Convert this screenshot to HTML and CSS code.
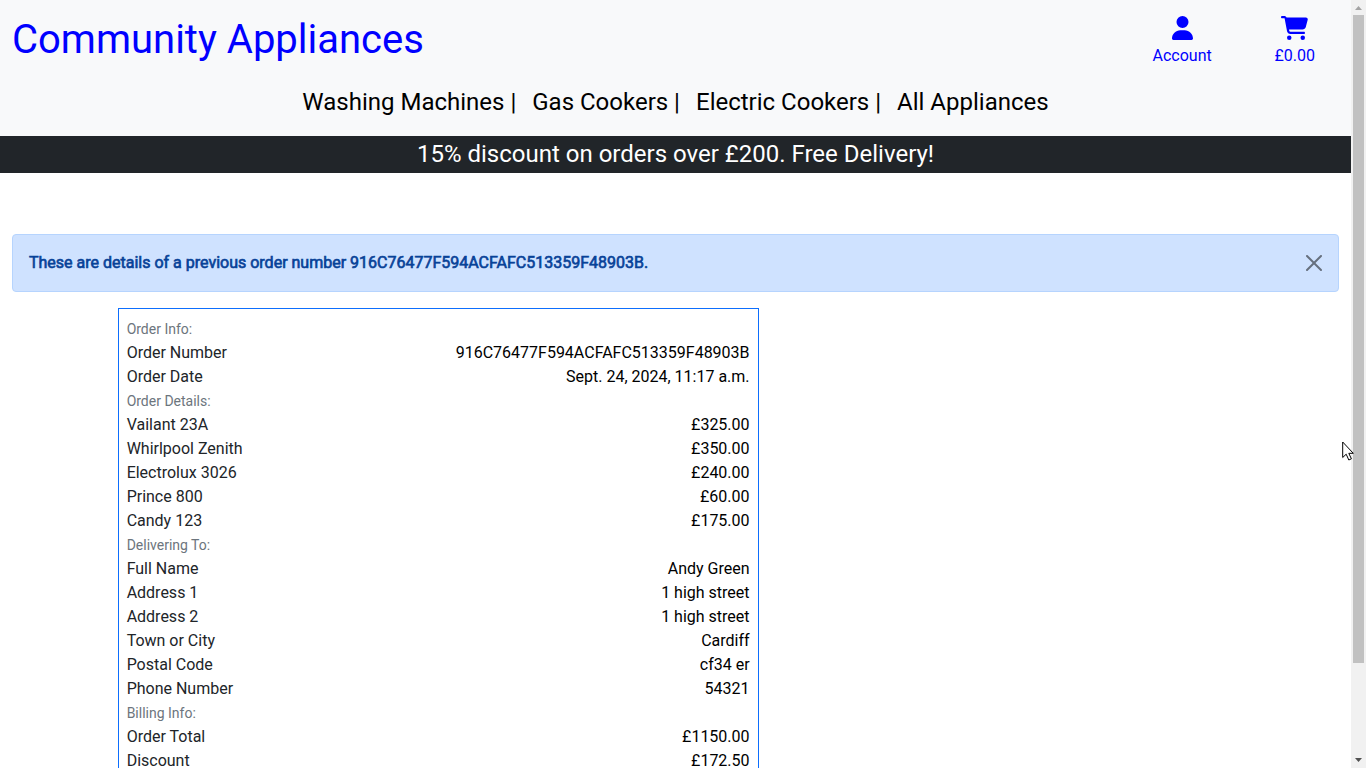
FILE: index.html
```html
<!DOCTYPE html>
<html lang="en">
<head>
<meta charset="utf-8">
<meta name="viewport" content="width=device-width, initial-scale=1">
<title>Community Appliances</title>
<link rel="stylesheet" href="styles.css">
</head>
<body>
<div class="page">
  <header class="site-header">
    <div class="top-row">
      <h1 class="brand"><a href="#">Community Appliances</a></h1>
      <a class="tool" href="#">
        <svg class="tool-icon" viewBox="0 0 448 512" aria-hidden="true"><path d="M224 256A128 128 0 1 0 224 0a128 128 0 1 0 0 256zm-45.700 48C79.800 304 0 383.800 0 482.300C0 498.700 13.300 512 29.700 512H418.300c16.400 0 29.700-13.300 29.700-29.700C448 383.800 368.200 304 269.700 304H178.300z"/></svg>
        <span>Account</span>
      </a>
      <a class="tool" href="#">
        <svg class="tool-icon" viewBox="0 0 576 512" aria-hidden="true"><path d="M0 24C0 10.700 10.700 0 24 0H69.500c22 0 41.500 12.800 50.600 32h411c26.300 0 45.500 25 38.600 50.400l-41 152.300c-8.500 31.400-37 53.300-69.500 53.300H170.700l5.400 28.500c2.200 11.300 12.100 19.500 23.600 19.500H488c13.300 0 24 10.700 24 24s-10.700 24-24 24H199.700c-34.600 0-64.300-24.600-70.700-58.500L77.400 54.500c-.7-3.800-4-6.500-7.900-6.500H24C10.700 48 0 37.300 0 24zM128 464a48 48 0 1 1 96 0 48 48 0 1 1 -96 0zm336-48a48 48 0 1 1 0 96 48 48 0 1 1 0-96z"/></svg>
        <span>£0.00</span>
      </a>
    </div>
    <nav>
      <ul class="nav-list">
        <li><a href="#">Washing Machines |</a></li>
        <li><a href="#">Gas Cookers |</a></li>
        <li><a href="#">Electric Cookers |</a></li>
        <li><a href="#">All Appliances</a></li>
      </ul>
    </nav>
  </header>
  <p class="banner">15% discount on orders over £200. Free Delivery!</p>
  <main class="content">
    <div class="alert" role="alert">
      <strong class="alert-text">These are details of a previous order number 916C76477F594ACFAFC513359F48903B.</strong>
      <button class="close" type="button" aria-label="Close">
        <svg class="close-icon" viewBox="0 0 16 16" aria-hidden="true"><path d="M.293.293a1 1 0 0 1 1.414 0L8 6.586 14.293.293a1 1 0 1 1 1.414 1.414L9.414 8l6.293 6.293a1 1 0 0 1-1.414 1.414L8 9.414l-6.293 6.293a1 1 0 0 1-1.414-1.414L6.586 8 .293 1.707a1 1 0 0 1 0-1.414z"/></svg>
      </button>
    </div>
    <section class="order">
      <h2 class="group">Order Info:</h2>
      <dl class="rows">
        <div class="row"><dt>Order Number</dt><dd>916C76477F594ACFAFC513359F48903B</dd></div>
        <div class="row"><dt>Order Date</dt><dd>Sept. 24, 2024, 11:17 a.m.</dd></div>
      </dl>
      <h2 class="group">Order Details:</h2>
      <dl class="rows">
        <div class="row"><dt>Vailant 23A</dt><dd>£325.00</dd></div>
        <div class="row"><dt>Whirlpool Zenith</dt><dd>£350.00</dd></div>
        <div class="row"><dt>Electrolux 3026</dt><dd>£240.00</dd></div>
        <div class="row"><dt>Prince 800</dt><dd>£60.00</dd></div>
        <div class="row"><dt>Candy 123</dt><dd>£175.00</dd></div>
      </dl>
      <h2 class="group">Delivering To:</h2>
      <dl class="rows">
        <div class="row"><dt>Full Name</dt><dd>Andy Green</dd></div>
        <div class="row"><dt>Address 1</dt><dd>1 high street</dd></div>
        <div class="row"><dt>Address 2</dt><dd>1 high street</dd></div>
        <div class="row"><dt>Town or City</dt><dd>Cardiff</dd></div>
        <div class="row"><dt>Postal Code</dt><dd>cf34 er</dd></div>
        <div class="row"><dt>Phone Number</dt><dd>54321</dd></div>
      </dl>
      <h2 class="group">Billing Info:</h2>
      <dl class="rows">
        <div class="row"><dt>Order Total</dt><dd>£1150.00</dd></div>
        <div class="row"><dt>Discount</dt><dd>£172.50</dd></div>
      </dl>
    </section>
  </main>
</div>
<div class="scrollbar" aria-hidden="true">
  <svg class="arrow arrow-up" viewBox="0 0 15 15"><path d="M4 10h7L7.500 6z"/></svg>
  <div class="track"><div class="thumb"></div></div>
  <svg class="arrow arrow-down" viewBox="0 0 15 15"><path d="M4 5h7L7.500 9z"/></svg>
</div>
<svg class="cursor" viewBox="0 0 12 20" aria-hidden="true"><path d="M.7 1v15.500l3.500-3.300 2.600 5.800 2.600-1.200-2.600-5.500h4.500z"/></svg>
</body>
</html>
```

FILE: styles.css
```css
* {
  box-sizing: border-box;
}

body {
  position: relative;
  display: flex;
  height: 100vh;
  margin: 0;
  overflow: hidden;
  background: #fff;
  color: #212529;
  font: 16px/24px Roboto, sans-serif;
}

h1, h2, p, ul, dl, dd {
  margin: 0;
  padding: 0;
  font-weight: 400;
}

a {
  color: inherit;
  text-decoration: none;
}

.page {
  flex: 1;
  min-width: 0;
}

.site-header {
  padding: 16px 0;
  background: #f8f9fa;
}

.top-row {
  display: flex;
  color: #00f;
}

.brand {
  flex: 1;
  padding-left: 12px;
  font-size: 40px;
  line-height: 48px;
}

.tool {
  display: flex;
  width: calc(100% / 12);
  flex-direction: column;
  align-items: center;
  gap: 4px;
}

.tool-icon {
  display: block;
  height: 24px;
  fill: currentColor;
}

.nav-list {
  display: flex;
  justify-content: center;
  gap: 16px;
  padding-top: 16px;
  list-style: none;
  color: #000;
  font-size: 24px;
  line-height: 36px;
}

.banner {
  padding: 4px;
  background: #212529;
  color: #fff;
  font-size: 24px;
  line-height: 29px;
  text-align: center;
}

.content {
  padding: 61px 12px 0;
}

.alert {
  display: flex;
  align-items: center;
  justify-content: space-between;
  padding: 16px;
  border: 1px solid #b6d4fe;
  border-radius: 4px;
  background: #cfe2ff;
  color: #084298;
}

/* Outlined regular weight keeps the regular letter widths. */
.alert-text {
  font-weight: 400;
  -webkit-text-stroke: 0.04em currentColor;
}

.close {
  padding: 0;
  border: 0;
  background: none;
  opacity: 0.5;
}

.close-icon {
  display: block;
  width: 16px;
  height: 16px;
}

.order {
  width: 48.3%;
  margin: 16px 0 0 7.96%;
  padding: 8px;
  border: 1px solid #0d6efd;
}

.group {
  color: #6c757d;
  font-size: 14px;
  line-height: 24px;
}

.row {
  display: flex;
  justify-content: space-between;
}

.row dd {
  color: #000;
}

.scrollbar {
  display: flex;
  flex-direction: column;
  width: 15px;
  background: #f1f1f1;
}

.arrow {
  width: 15px;
  height: 15px;
}

.arrow-up {
  fill: #a3a3a3;
}

.arrow-down {
  fill: #505050;
}

.track {
  flex: 1;
  padding: 0 2px;
}

.thumb {
  height: 87.8%;
  background: #c1c1c1;
}

.cursor {
  position: absolute;
  top: 441px;
  right: 12px;
  width: 12px;
  height: 20px;
  fill: #fff;
  stroke: #000;
}
```
